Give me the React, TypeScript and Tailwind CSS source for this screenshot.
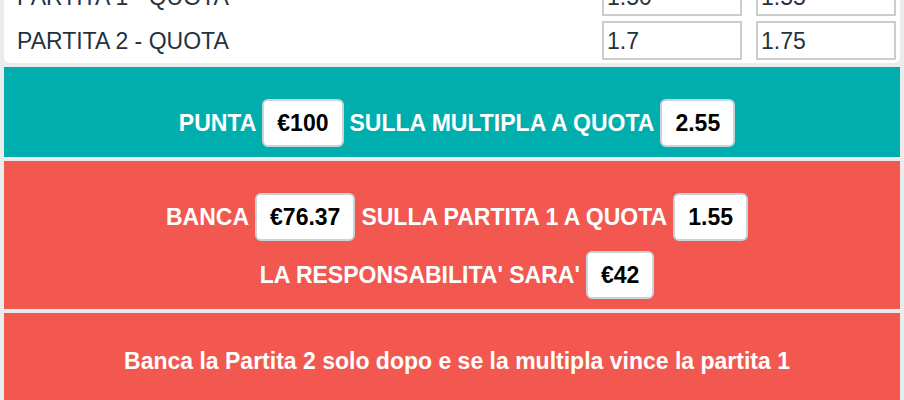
import React from "react";

function Box({ children }: { children: React.ReactNode }) {
  return (
    <span className="inline-flex h-[48px] items-center rounded-[6px] border-2 border-[#c9d3db] bg-white px-[13px] text-[23px] leading-[26px] font-bold text-black">
      {children}
    </span>
  );
}

function Row({ label, a, b }: { label: string; a: string; b: string }) {
  return (
    <div className="flex h-[39px] items-center">
      <div className="flex-1 text-[23px] leading-[26px] text-[#24323f]">{label}</div>
      <div className="flex gap-[14px]">
        <div className="flex h-[39px] w-[140px] items-center border-2 border-[#cccccc] bg-white pl-[3px] text-[23px] leading-[26px] text-[#24323f]">
          {a}
        </div>
        <div className="flex h-[39px] w-[140px] items-center border-2 border-[#cccccc] bg-white pl-[3px] text-[23px] leading-[26px] text-[#24323f]">
          {b}
        </div>
      </div>
    </div>
  );
}

export default function App() {
  return (
    <div className="h-[400px] overflow-hidden bg-[#ececec] px-[4px] font-['Liberation_Sans',Arial,sans-serif]">
      <div className="-mt-[28px] flex flex-col gap-[5px] rounded-b-[6px] bg-white pt-[5px] pb-[3px] pl-[13px] pr-[4px]">
        <Row label="PARTITA 1 - QUOTA" a="1.50" b="1.55" />
        <Row label="PARTITA 2 - QUOTA" a="1.7" b="1.75" />
      </div>

      <div className="mt-[4px] flex justify-center bg-[#00aeae] pt-[32px] pb-[10px] pl-[10px] text-[23px] font-bold text-white">
        <div className="flex items-center gap-[6px]">
          <span>PUNTA</span>
          <Box>€100</Box>
          <span>SULLA MULTIPLA A QUOTA</span>
          <Box>2.55</Box>
        </div>
      </div>

      <div className="mt-[4px] flex flex-col items-center gap-[10px] bg-[#f2584f] pt-[32px] pb-[10px] pl-[10px] text-[23px] font-bold text-white">
        <div className="flex items-center gap-[6px]">
          <span>BANCA</span>
          <Box>€76.37</Box>
          <span>SULLA PARTITA 1 A QUOTA</span>
          <Box>1.55</Box>
        </div>
        <div className="flex items-center gap-[6px]">
          <span>LA RESPONSABILITA' SARA'</span>
          <Box>€42</Box>
        </div>
      </div>

      <div className="mt-[4px] flex h-[100px] justify-center bg-[#f2584f] pt-[36px] pl-[10px] text-[23px] leading-[24px] font-bold text-white">
        Banca la Partita 2 solo dopo e se la multipla vince la partita 1
      </div>
    </div>
  );
}
